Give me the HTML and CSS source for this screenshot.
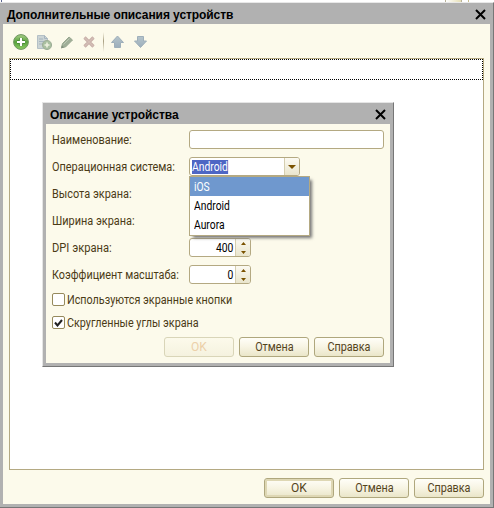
FILE: index.html
```
<!DOCTYPE html>
<html lang="ru">
<head>
<meta charset="utf-8">
<title>Дополнительные описания устройств</title>
<link rel="stylesheet" href="styles.css">
</head>
<body>
<div class="backdrop"><i class="strip-blue"></i><i class="strip-button"></i><i class="strip-line"></i></div>
<main class="window">
  <header class="titlebar">
    <h1 class="t-main">Дополнительные описания устройств</h1>
    <svg class="close" width="11" height="11" viewBox="0 0 11 11"><path d="M1 1L10 10M10 1L1 10"/></svg>
  </header>
  <section class="content">
    <div class="toolbar">
      <svg width="145" height="22" viewBox="0 0 145 22">
        <defs>
          <linearGradient id="green" x2="0" y2="1"><stop stop-color="#a9cf88"/><stop offset=".5" stop-color="#57a13c"/><stop offset="1" stop-color="#8cce60"/></linearGradient>
          <linearGradient id="blue" x2="0" y2="1"><stop stop-color="#b5c4cb"/><stop offset="1" stop-color="#9caebb"/></linearGradient>
          <linearGradient id="sep" x2="0" y2="1"><stop stop-color="#b5ac91" stop-opacity="0"/><stop offset=".45" stop-color="#a79e80"/><stop offset="1" stop-color="#b5ac91" stop-opacity="0"/></linearGradient>
        </defs>
        <circle cx="8" cy="11" r="7.400" fill="url(#green)" stroke="#6f9661" stroke-width="1"/>
        <path d="M8 7v8M4 11h8" stroke="#4c8b39" stroke-width="4"/><path d="M8 7v8M4 11h8" stroke="#fff" stroke-width="2.2"/>
        <path d="M24.500 4.500h7l3 3v10h-10z" fill="#cbd4d5" stroke="#b4c0c6"/><path d="M31.500 4.500v3h3M26 8h4M26 10.500h6M26 13h4" fill="none" stroke="#a6b5bf"/>
        <circle cx="34" cy="14" r="4.600" fill="#a9bfa0" stroke="#9eae98"/><path d="M34 11.500v5M31.500 14h5" stroke="#eef1df" stroke-width="1.600"/>
        <path d="M48.500 16.500l1-4 6.500-6.500 3.500 3-7 7z" fill="#9fae98" stroke="#98a78f"/><path d="M50.500 13.500l6-6" stroke="#bdc8b3"/><path d="M48 17.500l1-3 2 2z" fill="#7f8d7c"/>
        <path d="M71.500 6.500l9 9M80.500 6.500l-9 9" stroke="#c8b0a9" stroke-width="3.200"/><path d="M71.500 6.500l9 9M80.500 6.500l-9 9" stroke="#d3beb6" stroke-width="1.200"/>
        <path d="M90 1h1v20h-1z" fill="url(#sep)"/>
        <path d="M104.500 5l6 6.500h-3v5h-6v-5h-3z" fill="url(#blue)" stroke="#9eafba"/>
        <path d="M124.500 5.500h6v4.500h3l-6 6.500-6-6.500h3z" fill="url(#blue)" stroke="#9eafba"/>
      </svg>
    </div>
    <div class="table">
      <svg class="focus-row" width="473" height="21"><path d="M0 .5H473M0 20.500H473M.5 0V21M472.500 0V21"/></svg>
    </div>
    <footer class="actions"><button class="default"><span>OK</span></button><button><span class="narrow">Отмена</span></button><button><span class="narrow">Справка</span></button></footer>
  </section>
</main>

<section class="dialog">
  <header class="titlebar">
    <h2 class="t-dialog">Описание устройства</h2>
    <svg class="close" width="11" height="11" viewBox="0 0 11 11"><path d="M1 1L10 10M10 1L1 10"/></svg>
  </header>
  <div class="form">
    <div class="row"><label>Наименование:</label><div class="field wide"></div></div>
    <div class="row"><label>Операционная система:</label>
      <div class="field combo"><span class="selected">Android</span><i class="drop"><svg width="8" height="4"><path d="M0 0h8l-4 4z"/></svg></i>
        <ul class="menu"><li class="active"><span>iOS</span></li><li><span>Android</span></li><li><span>Aurora</span></li></ul>
      </div>
    </div>
    <div class="row"><label>Высота экрана:</label></div>
    <div class="row"><label>Ширина экрана:</label></div>
    <div class="row"><label class="l-dpi">DPI экрана:</label><div class="field spin"><span>400</span><i class="arrows"><svg width="5" height="12"><path d="M0 3l2.500-3 2.500 3zM0 9h5l-2.500 3z"/></svg></i></div></div>
    <div class="row"><label class="l-scale">Коэффициент масштаба:</label><div class="field spin"><span>0</span><i class="arrows"><svg width="5" height="12"><path d="M0 3l2.500-3 2.500 3zM0 9h5l-2.500 3z"/></svg></i></div></div>
    <div class="check"><i class="box"></i><span>Используются экранные кнопки</span></div>
    <div class="check"><i class="box"><svg width="9" height="8"><path d="M1 3.500l2.500 3L8 1"/></svg></i><span>Скругленные углы экрана</span></div>
    <footer class="actions"><button disabled><span>OK</span></button><button><span class="narrow">Отмена</span></button><button><span class="narrow">Справка</span></button></footer>
  </div>
</section>
</body>
</html>
```
FILE: styles.css
```
* { box-sizing: border-box; }
body { margin: 0; width: 494px; height: 508px; overflow: hidden; background: #fff; font: 12px/19px Roboto, sans-serif; color: #4b3b16; }
span, label, h1, h2 { white-space: nowrap; }
i { font-style: normal; }
.backdrop { height: 2px; display: flex; background: #fff; }
.strip-blue { width: 1px; margin-left: 1px; background: #5a6590; }
.strip-button { width: 17px; margin-left: 443px; border: solid #b8b299; border-width: 0 1px; background: linear-gradient(90deg, #fff, #e6dfb6); }
.strip-line { width: 1px; margin-left: 6px; background: #c8bd8f; }
.window { height: 506px; background: #b1b1b1; border-top: 1px solid #e8e8e8; border-right: 1px solid #777; border-bottom: 1px solid #777; padding: 0 3px 3px; display: flex; flex-direction: column; }
.titlebar { height: 21px; display: flex; justify-content: space-between; flex: none; color: #000; }
.titlebar h1, .titlebar h2 { margin: 0; padding: 3px 0 0 4px; font: bold 12px/18px "Liberation Sans", sans-serif; }
.titlebar .t-main { letter-spacing: -0.08px; }
.titlebar .t-dialog { letter-spacing: -0.05px; }
.close { margin: 6px 4px 0 0; fill: none; stroke: #000; stroke-width: 2; }
.content { flex: 1; background: #fcfaeb; padding: 7px 6px 6px; display: flex; flex-direction: column; }
.toolbar { height: 27px; padding-left: 4px; flex: none; }
.toolbar svg { display: block; }
.table { height: 412px; border: 1px solid #b4a982; background: #fff; flex: none; }
.focus-row { display: block; fill: none; stroke: #000; stroke-dasharray: 1 1; shape-rendering: crispEdges; }
.actions { display: flex; justify-content: flex-end; gap: 5px; }
.content .actions { margin-top: 8px; }
button { width: 70px; height: 20px; padding: 1px 0 0; border: 1px solid #afa77d; border-radius: 3px; background: linear-gradient(#fffef8, #f7f4e3 50%, #eae6c9); font: 12px/17px Roboto, sans-serif; color: #54441c; display: flex; justify-content: center; }
button .narrow { transform: scaleX(.9); }
button.default { box-shadow: inset 0 0 0 2px #ded7b4; }
button:disabled { border-color: #d9d5b8; color: #ecd0a9; background: linear-gradient(#fcfaeb, #f5f2df); }
.dialog { position: absolute; left: 42px; top: 102px; width: 352px; height: 265px; border: 1px solid #777; border-top-color: #e5e5e5; border-left-color: #e5e5e5; background: #b1b1b1; padding: 0 3px 3px; display: flex; flex-direction: column; }
.form { flex: 1; background: #fcfaeb; padding: 6px 6px 0; }
.row { height: 19px; margin-bottom: 8px; display: grid; grid-template-columns: 137px 1fr; }
.row label { padding-top: 1px; justify-self: start; transform: scaleX(.91); transform-origin: left; }
.row .l-dpi { transform: scaleX(.93); }
.row .l-scale { transform: scaleX(.9); }
.field { grid-column: 2; height: 19px; border: 1px solid #b4a982; border-radius: 3px; background: #fff; display: flex; }
.wide { width: 195px; }
.combo { width: 111px; position: relative; justify-content: space-between; color: #000; }
.selected { height: 14px; margin: 2px 0 0 2px; line-height: 15px; color: #fff; background: #4d66c4; transform: scaleX(.86); transform-origin: left; }
.drop, .arrows { width: 15px; border-left: 1px solid #d5ceb0; background: linear-gradient(#fcfaf2, #e9e5cd); display: flex; align-items: center; justify-content: center; fill: #7a5200; border-radius: 0 2px 2px 0; }
.menu { position: absolute; z-index: 2; left: -1px; top: 18px; width: 121px; height: 60px; margin: 0; padding: 0; border: 1px solid #b4a982; background: #fff; list-style: none; box-shadow: 3px 3px 3px -1px #777; }
.menu li { height: 19px; padding-left: 4px; color: #000; line-height: 21px; }
.menu li span { display: inline-block; transform: scaleX(.86); transform-origin: left; }
.menu li.active { color: #fff; background: #6f98ce; }
.spin { width: 62px; color: #000; }
.spin span { flex: 1; padding-right: 2px; line-height: 19px; text-align: right; transform: scaleX(.86); transform-origin: right; }
.check { height: 13px; margin-bottom: 10px; display: flex; align-items: center; gap: 2px; }
.check span { padding-top: 2px; transform: scaleX(.898); transform-origin: left; }
.row + .check { margin-top: 9px; }
.box { width: 13px; height: 13px; border: 1px solid #968a5c; border-radius: 2px; background: #fff; display: flex; align-items: center; justify-content: center; }
.box svg { fill: none; stroke: #222; stroke-width: 2; }
.form .actions { margin-top: -2px; }
```
